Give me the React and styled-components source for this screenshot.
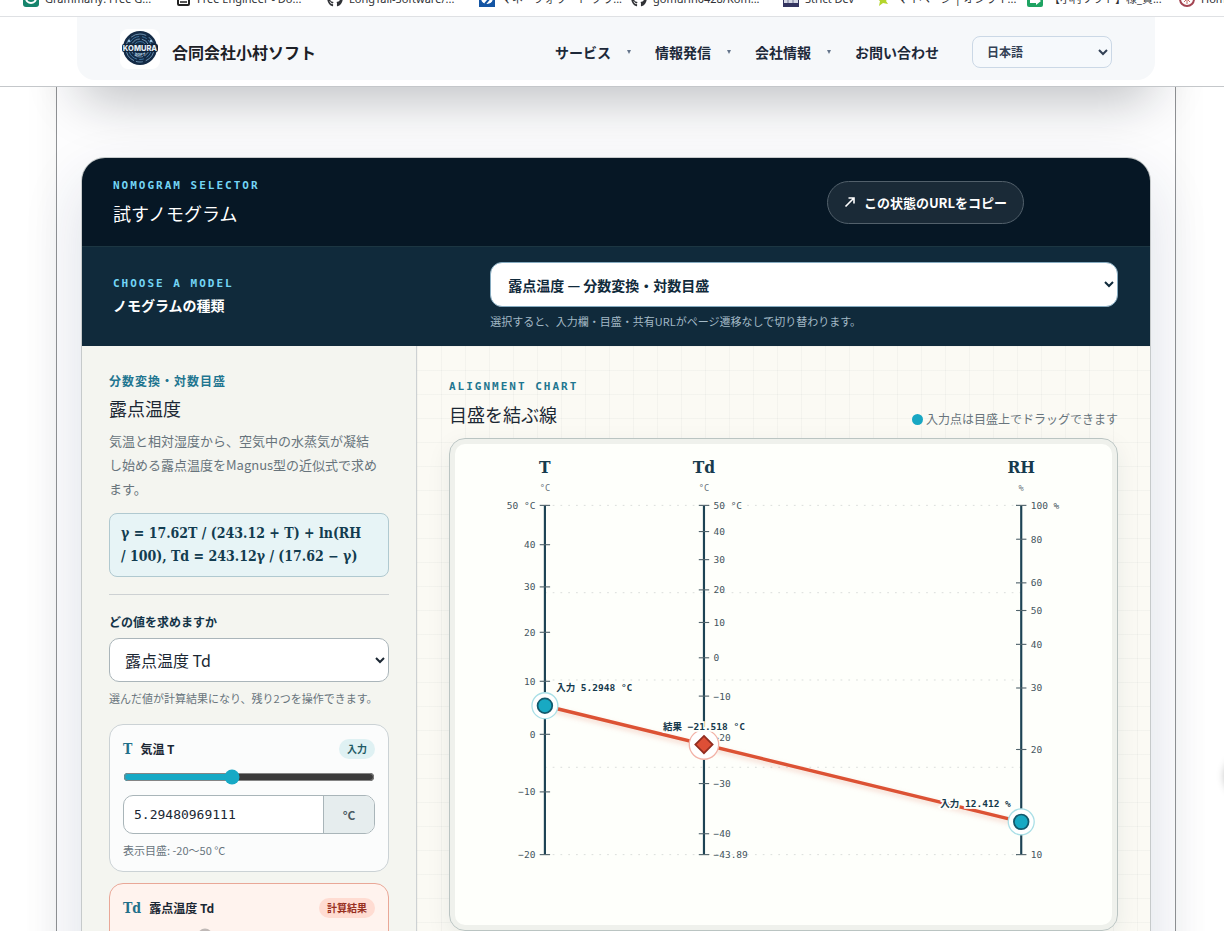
import React from 'react'
import styled, { createGlobalStyle } from 'styled-components'
import { FaGithub } from 'react-icons/fa'

const sans = '"Noto Sans CJK JP", "Noto Sans", sans-serif'
const mono = '"DejaVu Sans Mono", "Noto Sans CJK JP", monospace'
const serif = '"DejaVu Serif Condensed", "DejaVu Serif", "Noto Sans CJK JP", serif'

const GlobalStyle = createGlobalStyle`
  * { box-sizing: border-box; }
  body {
    margin: 0;
    background: #fff;
    color: #1b2733;
    font-family: ${sans};
  }
  h2, h3, p { margin: 0; }
  button, input, select { font-family: inherit; }
`

const Page = styled.div`
  height: 100vh;
  overflow: hidden;
`

/* Bookmarks */

const Bookmarks = styled.nav`
  position: relative;
  z-index: 3;
  display: flex;
  align-items: flex-end;
  gap: 22px;
  height: 17px;
  padding: 0 0 9px 23px;
  overflow: hidden;
  background: #fff;
  border-bottom: 1px solid #dfe1e4;
`

const Bookmark = styled.a`
  display: flex;
  flex: none;
  align-items: center;
  gap: 6px;
  width: ${props => props.$short ? '70px' : '130px'};
  height: 16px;
  font: 11px/16px "Noto Sans", ${sans};
  color: #303236;
  text-decoration: none;
  white-space: nowrap;
  svg { flex: none; }
`

/* Site header */

const Header = styled.header`
  position: relative;
  z-index: 2;
  height: 70px;
  padding: 0 69px 6px 77px;
  background: #fff;
  border-bottom: 1px solid #c4c7ca;
`

const HeaderPanel = styled.div`
  display: flex;
  align-items: center;
  justify-content: space-between;
  height: 63px;
  padding: 6px 43px 0;
  background: #f6f8fa;
  border-radius: 0 0 18px 18px;
`

const Brand = styled.a`
  display: flex;
  align-self: flex-start;
  align-items: flex-end;
  gap: 12px;
  margin-top: 6px;
  color: #1c2026;
  font-size: 16px;
  font-weight: 700;
  line-height: 34px;
  text-decoration: none;
`

const LogoTile = styled.span`
  display: grid;
  place-items: center;
  width: 40px;
  height: 40px;
  background: #fff;
  border-radius: 8px;
`

const Nav = styled.nav`
  display: flex;
  align-items: center;
  gap: 24px;
`

const NavLink = styled.a`
  display: flex;
  align-items: center;
  gap: 16px;
  color: #1d2939;
  font-size: 14px;
  font-weight: 700;
  text-decoration: none;
`

const Caret = styled.span`
  border: 2px solid transparent;
  border-top: 4px solid #64748b;
  border-bottom: 0;
`

const LanguageSelect = styled.select`
  width: 140px;
  height: 32px;
  margin-left: 9px;
  padding: 0 10px;
  color: #334155;
  font-size: 12px;
  font-weight: 700;
  background: #f6f9fc;
  border: 1px solid #cbd8e6;
  border-radius: 8px;
`

/* Column */

const Column = styled.main`
  margin: 0 48px 0 56px;
  padding: 0 24px;
  background: #fdfdfe;
  border: 1px solid #8f9194;
  border-width: 0 1px;
  box-shadow: 0 0 36px rgba(20, 30, 45, .05);
`

const HeroEnd = styled.div`
  height: 64px;
  margin: -70px -4px 76px;
  border-radius: 28px;
  box-shadow: 0 20px 50px rgba(15, 23, 32, .26);
`

const Tool = styled.section`
  overflow: hidden;
  background: #f4f5f0;
  border: 1px solid #c6cacb;
  border-radius: 24px 24px 0 0;
  box-shadow: 0 24px 60px rgba(30, 50, 90, .14);
`

const ToolHeader = styled.div`
  display: flex;
  align-items: center;
  gap: 16px;
  height: 88px;
  padding: 0 32px 0 31px;
  background: #061725;
`

const ToolTitle = styled.div`
  flex: 1;
`

const Eyebrow = styled.p`
  color: ${props => props.$dark ? '#73d5f5' : '#1f7690'};
  font-family: ${mono};
  font-size: 11px;
  font-weight: 700;
  line-height: 18px;
  letter-spacing: 2px;
`

const Title = styled.h2`
  margin-top: 4px;
  color: ${props => props.$dark ? '#fff' : '#1b2733'};
  font-size: 18px;
  font-weight: 400;
  line-height: 28px;
`

const CopyButton = styled.button`
  display: flex;
  align-items: center;
  justify-content: center;
  gap: 8px;
  height: 43px;
  padding: 0 16px;
  color: #fff;
  font-size: 13px;
  font-weight: 700;
  background: #1a2a37;
  border: 1px solid #52606b;
  border-radius: 22px;
`

const CopyStatus = styled.span`
  width: 78px;
`

const ModelRow = styled.div`
  display: grid;
  grid-template-columns: minmax(0, 11fr) minmax(0, 20fr);
  gap: 32px;
  align-items: center;
  padding: 15px 32px 17px 31px;
  background: #102a3b;
  border-top: 1px solid #1c3642;
`

const ModelLabel = styled.label`
  display: block;
  color: #fff;
  font-size: 14px;
  font-weight: 700;
  line-height: 24px;
`

const ModelSelect = styled.select`
  display: block;
  width: 100%;
  height: 45px;
  padding: 0 13px;
  color: #102a3b;
  font-size: 14px;
  font-weight: 600;
  background: #fff;
  border: 1px solid #86abc0;
  border-radius: 12px;
`

const Hint = styled.p`
  margin-top: ${props => props.$dark ? '6px' : '8px'};
  color: ${props => props.$dark ? '#a3b9c6' : '#68747c'};
  font-size: 11px;
  line-height: 16px;
`

const Workspace = styled.div`
  display: grid;
  grid-template-columns: 335px minmax(0, 1fr);
`

/* Controls */

const Controls = styled.div`
  padding: 26px 27px;
  border-right: 1px solid #cdd1d3;
`

const Kind = styled.p`
  color: #1f7690;
  font-size: 12px;
  font-weight: 700;
  line-height: 18px;
  letter-spacing: 1px;
`

const Description = styled.p`
  margin-top: 7px;
  color: #68747c;
  font-size: 13px;
  line-height: 24px;
`

const Formula = styled.p`
  margin-top: 12px;
  padding: 8px 11px;
  color: #123c50;
  font-family: ${serif};
  font-size: 14px;
  font-weight: 700;
  line-height: 23px;
  background: #e7f4f6;
  border: 1px solid #b0c9d0;
  border-radius: 8px;
`

const Target = styled.div`
  margin: 17px 0 18px;
  padding-top: 18px;
  border-top: 1px solid #cdd1d3;
`

const TargetLabel = styled.label`
  display: block;
  color: #123347;
  font-size: 12px;
  font-weight: 700;
  line-height: 18px;
`

const TargetSelect = styled.select`
  display: block;
  width: 100%;
  height: 44px;
  margin-top: 7px;
  padding: 0 11px;
  color: #1b2733;
  font-size: 16px;
  background: #fff;
  border: 1px solid #aab5ba;
  border-radius: 10px;
`

const ValueCard = styled.div`
  margin-bottom: 11px;
  padding: 13px;
  background: ${props => props.$result ? '#fff3ee' : '#fbfcfc'};
  border: 1px solid ${props => props.$result ? '#e9a797' : '#cbd2d5'};
  border-radius: 14px;
`

const ValueHead = styled.div`
  display: flex;
  align-items: center;
  gap: 8px;
  height: 21px;
`

const Symbol = styled.span`
  color: #22708a;
  font-family: ${serif};
  font-size: 14px;
  font-weight: 700;
`

const ValueName = styled.label`
  flex: 1;
  color: #1b2733;
  font-size: 12px;
  font-weight: 700;
`

const Badge = styled.span`
  padding: 0 8px;
  color: ${props => props.$result ? '#98301f' : '#1f5b66'};
  font-size: 10px;
  font-weight: 700;
  line-height: 20px;
  background: ${props => props.$result ? '#ffdcd2' : '#dff1f3'};
  border-radius: 10px;
`

const Slider = styled.input`
  display: block;
  width: 100%;
  height: 16px;
  margin: 10px 0;
  accent-color: #16a9c5;
  color-scheme: dark;
  &:disabled { opacity: .45; }
`

const Field = styled.div`
  display: flex;
  height: 39px;
  overflow: hidden;
  background: #fff;
  border: 1px solid #a9b5b9;
  border-radius: 10px;
`

const NumberInput = styled.input`
  flex: 1;
  min-width: 0;
  padding: 0 10px;
  color: #1b2733;
  font-family: ${mono};
  font-size: 13px;
  background: transparent;
  border: 0;
`

const Unit = styled.span`
  width: 51px;
  color: #4d5c64;
  font-size: 12px;
  font-weight: 700;
  line-height: 37px;
  text-align: center;
  background: #e6edee;
  border-left: 1px solid #a9b5b9;
`

/* Chart */

const ChartPanel = styled.div`
  padding: 32px;
  background-color: #fbfaf4;
  background-image:
    linear-gradient(rgba(16, 42, 58, .03) 1px, transparent 1px),
    linear-gradient(90deg, rgba(16, 42, 58, .03) 1px, transparent 1px);
  background-size: 24px 24px;
`

const ChartHead = styled.div`
  display: flex;
  align-items: flex-end;
  justify-content: space-between;
`

const DragNote = styled.p`
  display: flex;
  align-items: center;
  gap: 3px;
  color: #68747c;
  font-size: 12px;
  line-height: 18px;
  &::before {
    content: '';
    width: 11px;
    height: 11px;
    background: #18a7c3;
    border-radius: 50%;
  }
`

const ChartFrame = styled.div`
  margin-top: 10px;
  padding: 5px;
  background: #fefffb;
  border: 1px solid #bac4c2;
  border-radius: 16px;
  box-shadow: inset 0 0 0 5px #eff1ec, 0 8px 24px rgba(30, 50, 60, .08);
`

const Chart = styled.svg`
  display: block;
  width: 100%;
  font-family: ${mono};
  font-size: 11px;
  fill: #44555e;
  .name { fill: #163a4d; font-family: ${serif}; font-size: 20px; font-weight: 700; }
  .unit { fill: #68747c; font-size: 10px; }
  .axis { stroke: #1d4354; stroke-width: 2.5; }
  .tick { stroke: #52646c; stroke-width: 1.3; }
  .guide { stroke: #d5d9d6; stroke-dasharray: 2 7; }
  .result-line { stroke: #dc5234; stroke-width: 4; filter: drop-shadow(0 3px 3px rgba(220, 82, 52, .25)); }
  .value { fill: #163a4d; font-weight: 700; stroke: #fefffb; stroke-width: 4; paint-order: stroke; }
`

const SideButton = styled.button`
  position: fixed;
  right: -43px;
  bottom: 134px;
  width: 42px;
  height: 42px;
  background: #fff;
  border: 0;
  border-radius: 50%;
  box-shadow: 0 0 8px rgba(0, 0, 0, .3);
`

const TOP = 71
const BOTTOM = 475

const magnus = t => 17.62 * t / (243.12 + t)

const scale = (fn, min, max) => value =>
  TOP + (fn(max) - fn(value)) / (fn(max) - fn(min)) * (BOTTOM - TOP)

const axes = [
  { name: 'T', unit: '°C', x: 104, side: -1, y: scale(magnus, -20, 50), ticks: [50, 40, 30, 20, 10, 0, -10, -20] },
  { name: 'Td', unit: '°C', x: 288, side: 1, y: scale(magnus, -43.89, 50), ticks: [50, 40, 30, 20, 10, 0, -10, -20, -30, -40, -43.89] },
  { name: 'RH', unit: '%', x: 655, side: 1, y: scale(Math.log, 10, 100), ticks: [100, 80, 60, 50, 40, 30, 20, 10] }
]

const format = n => String(n).replace('-', '−')

const Axis = ({ name, unit, x, y, side, ticks }) => (
  <g>
    <text className='name' x={x} y='34' textAnchor='middle'>{name}</text>
    <text className='unit' x={x} y='54' textAnchor='middle'>{unit}</text>
    <line className='axis' x1={x} x2={x} y1={TOP} y2={BOTTOM} />
    {ticks.map((tick, i) => (
      <g key={tick}>
        <line className='tick' x1={x - 6} x2={x + 6} y1={y(tick)} y2={y(tick)} />
        <text x={x + side * 11} y={y(tick) + 4} textAnchor={side < 0 ? 'end' : 'start'}>
          {format(tick) + (i === 0 ? ' ' + unit : '')}
        </text>
      </g>
    ))}
  </g>
)

const Nomogram = () => {
  const [t, td, rh] = axes
  const a = t.y(5.2948)
  const b = td.y(-21.518)
  const c = rh.y(12.412)

  return (
    <Chart viewBox='0 0 760 556' role='img' aria-label='露点温度'>
      {[0, 1, 2, 3, 4].map(i => (
        <line key={i} className='guide' x1='104' x2='655' y1={TOP + i * 101} y2={TOP + i * 101} />
      ))}
      {axes.map(axis => <Axis key={axis.name} {...axis} />)}
      <line className='result-line' x1={t.x} y1={a} x2={rh.x} y2={c} />
      {[[t.x, a], [rh.x, c]].map(([x, y]) => (
        <g key={x}>
          <circle cx={x} cy={y} r='15' fill='#fff' stroke='#a9dfe6' strokeWidth='1.5' />
          <circle cx={x} cy={y} r='8.5' fill='#18a9c3' stroke='#14596c' strokeWidth='2' />
        </g>
      ))}
      <circle cx={td.x} cy={b} r='17' fill='#fff' stroke='#f2b2a7' strokeWidth='1.5' />
      <path d={`M${td.x} ${b - 10}l10 10l-10 10l-10 -10z`} fill='#dd4f36' stroke='#922d20' strokeWidth='2' />
      <text className='value' x={t.x + 13} y={a - 17}>入力 5.2948 °C</text>
      <text className='value' x={td.x} y={b - 17} textAnchor='middle'>結果 −21.518 °C</text>
      <text className='value' x={rh.x - 12} y={c - 17} textAnchor='end'>入力 12.412 %</text>
    </Chart>
  )
}

const Logo = () => (
  <svg width='36' height='36' viewBox='0 0 36 36'>
    <circle cx='18' cy='17' r='17' fill='#142b46' />
    <g fill='none' stroke='#7fa6c4' strokeWidth='.8'>
      <circle cx='18' cy='17' r='14' strokeDasharray='16 3 7 2' />
      <circle cx='18' cy='17' r='11.5' stroke='#4583b4' strokeDasharray='11 3 5 2' />
      <circle cx='18' cy='17' r='9' strokeDasharray='9 2' />
      <circle cx='18' cy='17' r='6.5' stroke='#4583b4' />
    </g>
    <circle cx='7' cy='10' r='1.2' fill='#9cc6e5' />
    <circle cx='29' cy='10' r='1.2' fill='#9cc6e5' />
    <rect y='13' width='36' height='8' rx='2' fill='#10243b' />
    <text x='18' y='19.5' textAnchor='middle' fontFamily='Inter, sans-serif' fontSize='7.5' fontWeight='800' fill='#e5eef5'>KOMURA</text>
    <text x='18' y='25' textAnchor='middle' fontFamily='Inter, sans-serif' fontSize='4' fontWeight='700' fill='#b5cad9'>SOFT</text>
  </svg>
)

const bookmarkIcons = {
  grammarly: <><rect width='16' height='16' rx='3' fill='#15846c' /><circle cx='8' cy='7' r='5' fill='none' stroke='#fff' strokeWidth='2' /></>,
  page: <><rect x='3' y='2' width='11' height='12' rx='1' fill='#fff' stroke='#222' strokeWidth='2' /><path d='M5 7h7M5 11h7' stroke='#222' strokeWidth='1.5' /></>,
  money: <><rect width='16' height='16' fill='#1455a4' /><circle cx='8' cy='7' r='6' fill='#fff' /><path d='M6 13l5-6H8l3-4' fill='none' stroke='#1455a4' strokeWidth='2' /></>,
  strict: <><rect width='16' height='16' fill='#33345f' /><path d='M1 4h14v8H1z' fill='#d5d8e4' /><path d='M1 8h14M5 9v3M10 9v3' stroke='#777b98' /></>,
  star: <path d='M3 2l5 4 6-1-3 5 2 3-5-1-4 3 1-5-4-3z' fill='#b4d52c' />,
  sheet: <><rect width='16' height='16' rx='2' fill='#1ea362' /><path d='M3 9h6V6l5 4-5 4v-2H3z' fill='#fff' /></>,
  flower: <><circle cx='8' cy='8' r='7' fill='#fff' stroke='#a34452' strokeWidth='2' /><path d='M8 3v10M3 8h10M5 5l6 6M11 5l-6 6' stroke='#c56b65' /></>
}

const bookmarks = [
  ['grammarly', 'Grammarly: Free G...'],
  ['page', 'Free Engineer - Do...'],
  ['github', 'LongTail-Software/...'],
  ['money', 'マネーフォワード クラ...'],
  ['github', 'gomurin0428/Kom...'],
  ['strict', 'Strict Dev', true],
  ['star', 'マイページ | オンライ...'],
  ['sheet', '【小村ソフト】様_資...'],
  ['flower', 'Home']
]

const App = () => (
  <Page>
    <GlobalStyle />
    <Bookmarks>
      {bookmarks.map(([icon, label, short]) => (
        <Bookmark key={label} href='#' $short={short}>
          {icon === 'github' ? <FaGithub size={16} /> : <svg width='16' height='16'>{bookmarkIcons[icon]}</svg>}
          {label}
        </Bookmark>
      ))}
    </Bookmarks>

    <Header>
      <HeaderPanel>
        <Brand href='#'>
          <LogoTile><Logo /></LogoTile>
          合同会社小村ソフト
        </Brand>
        <Nav>
          <NavLink href='#'>サービス<Caret /></NavLink>
          <NavLink href='#'>情報発信<Caret /></NavLink>
          <NavLink href='#'>会社情報<Caret /></NavLink>
          <NavLink href='#'>お問い合わせ</NavLink>
          <LanguageSelect aria-label='言語'>
            <option>日本語</option>
          </LanguageSelect>
        </Nav>
      </HeaderPanel>
    </Header>

    <Column>
      <HeroEnd />
      <Tool>
        <ToolHeader>
          <ToolTitle>
            <Eyebrow $dark>NOMOGRAM SELECTOR</Eyebrow>
            <Title $dark>試すノモグラム</Title>
          </ToolTitle>
          <CopyButton type='button'>
            <svg width='12' height='12' viewBox='0 0 12 12' fill='none' stroke='#fff' strokeWidth='1.6'>
              <path d='M1.5 10.5L10 2M4.5 2H10v5.5' />
            </svg>
            この状態のURLをコピー
          </CopyButton>
          <CopyStatus role='status' />
        </ToolHeader>

        <ModelRow>
          <div>
            <Eyebrow $dark>CHOOSE A MODEL</Eyebrow>
            <ModelLabel htmlFor='model'>ノモグラムの種類</ModelLabel>
          </div>
          <div>
            <ModelSelect id='model'>
              <option>露点温度 — 分数変換・対数目盛</option>
            </ModelSelect>
            <Hint $dark>選択すると、入力欄・目盛・共有URLがページ遷移なしで切り替わります。</Hint>
          </div>
        </ModelRow>

        <Workspace>
          <Controls>
            <Kind>分数変換・対数目盛</Kind>
            <Title as='h3'>露点温度</Title>
            <Description>
              気温と相対湿度から、空気中の水蒸気が凝結<br />
              し始める露点温度をMagnus型の近似式で求め<br />
              ます。
            </Description>
            <Formula>
              γ = 17.62T / (243.12 + T) + ln(RH<br />
              / 100), Td = 243.12γ / (17.62 − γ)
            </Formula>

            <Target>
              <TargetLabel htmlFor='target'>どの値を求めますか</TargetLabel>
              <TargetSelect id='target'>
                <option>露点温度 Td</option>
              </TargetSelect>
              <Hint>選んだ値が計算結果になり、残り2つを操作できます。</Hint>
            </Target>

            <ValueCard>
              <ValueHead>
                <Symbol>T</Symbol>
                <ValueName htmlFor='t-value'>気温 T</ValueName>
                <Badge>入力</Badge>
              </ValueHead>
              <Slider type='range' min='0' max='1000' defaultValue='427' aria-label='気温 T' />
              <Field>
                <NumberInput id='t-value' defaultValue='5.29480969111' />
                <Unit>°C</Unit>
              </Field>
              <Hint>表示目盛: -20〜50 °C</Hint>
            </ValueCard>

            <ValueCard $result>
              <ValueHead>
                <Symbol>Td</Symbol>
                <ValueName htmlFor='td-value'>露点温度 Td</ValueName>
                <Badge $result>計算結果</Badge>
              </ValueHead>
              <Slider type='range' min='0' max='1000' defaultValue='315' disabled aria-label='露点温度 Td' />
              <Field>
                <NumberInput id='td-value' defaultValue='-21.518' readOnly />
                <Unit>°C</Unit>
              </Field>
            </ValueCard>
          </Controls>

          <ChartPanel>
            <ChartHead>
              <div>
                <Eyebrow>ALIGNMENT CHART</Eyebrow>
                <Title as='h3'>目盛を結ぶ線</Title>
              </div>
              <DragNote>入力点は目盛上でドラッグできます</DragNote>
            </ChartHead>
            <ChartFrame>
              <Nomogram />
            </ChartFrame>
          </ChartPanel>
        </Workspace>
      </Tool>
    </Column>
    <SideButton type='button' aria-label='上へ戻る' />
  </Page>
)

export default App
